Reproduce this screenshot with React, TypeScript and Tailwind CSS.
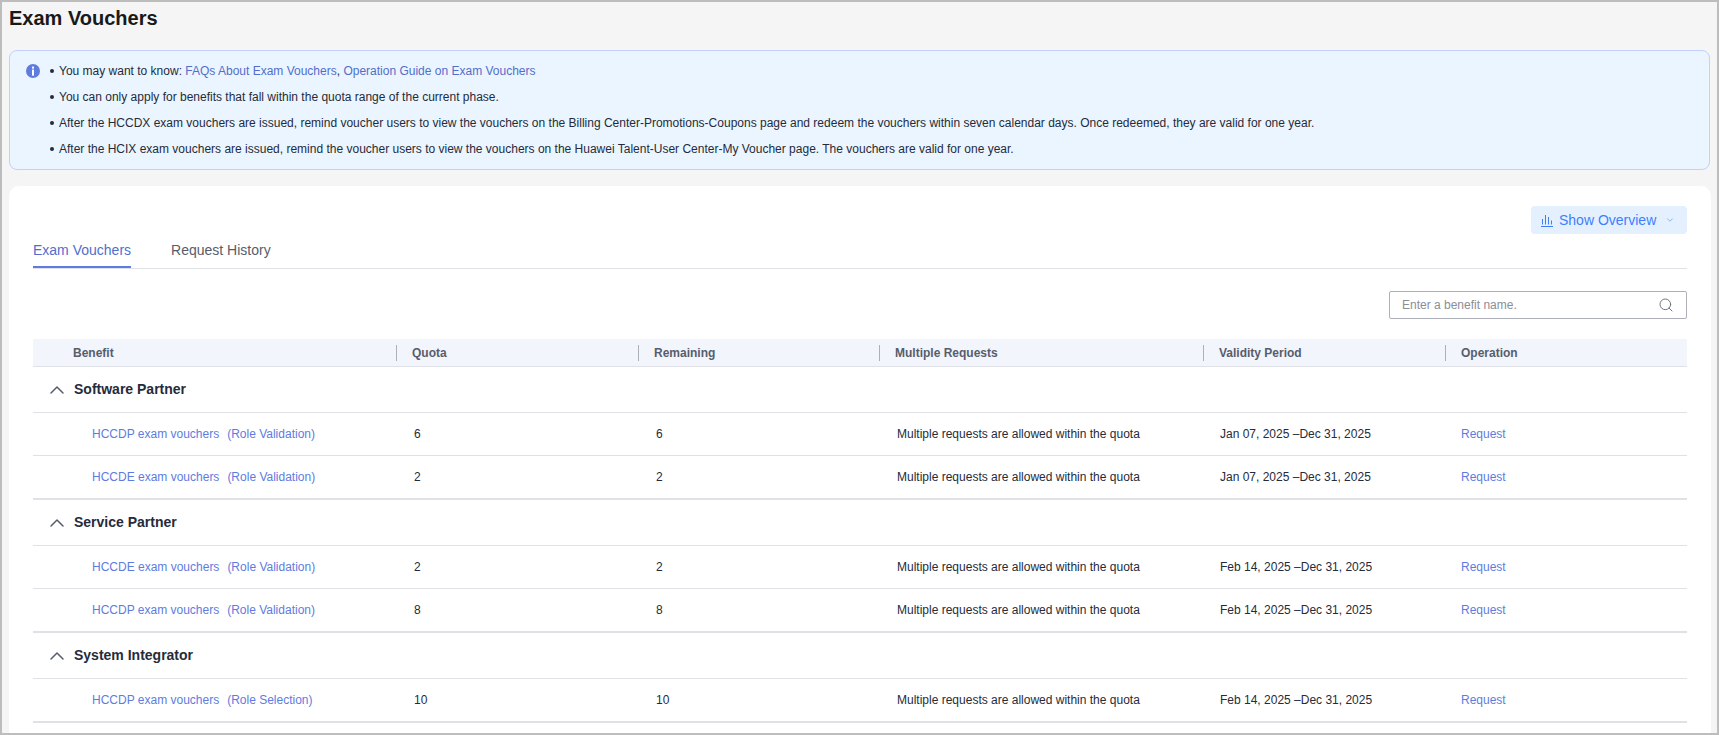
import { ChevronDown, ChevronUp, Search } from "lucide-react";

const font = { fontFamily: '"Liberation Sans", Arial, sans-serif' };

const groups = [
  {
    name: "Software Partner",
    rows: [
      { benefit: "HCCDP exam vouchers", role: "(Role Validation)", quota: "6", start: "Jan 07, 2025" },
      { benefit: "HCCDE exam vouchers", role: "(Role Validation)", quota: "2", start: "Jan 07, 2025" },
    ],
  },
  {
    name: "Service Partner",
    rows: [
      { benefit: "HCCDE exam vouchers", role: "(Role Validation)", quota: "2", start: "Feb 14, 2025" },
      { benefit: "HCCDP exam vouchers", role: "(Role Validation)", quota: "8", start: "Feb 14, 2025" },
    ],
  },
  {
    name: "System Integrator",
    rows: [{ benefit: "HCCDP exam vouchers", role: "(Role Selection)", quota: "10", start: "Feb 14, 2025" }],
  },
];

const notes = [
  "You can only apply for benefits that fall within the quota range of the current phase.",
  "After the HCCDX exam vouchers are issued, remind voucher users to view the vouchers on the Billing Center-Promotions-Coupons page and redeem the vouchers within seven calendar days. Once redeemed, they are valid for one year.",
  "After the HCIX exam vouchers are issued, remind the voucher users to view the vouchers on the Huawei Talent-User Center-My Voucher page. The vouchers are valid for one year.",
];

const columns = "grid grid-cols-[363px_242px_241px_324px_242px_1fr]";

function Bullet() {
  return <span className="mr-[5px] h-[4px] w-[4px] shrink-0 rounded-full bg-[#252b3a]" />;
}

function HeaderCell({ label, first }: { label: string; first?: boolean }) {
  return (
    <div className={first ? "flex h-full items-center pl-[40px]" : "flex h-full items-center"}>
      {!first && <span className="mr-[15px] h-[16px] w-px bg-[#adb0b8]" />}
      <span>{label}</span>
    </div>
  );
}

export default function App() {
  return (
    <div style={font} className="h-[735px] w-[1719px] overflow-hidden border-2 border-[#bdbdbd] bg-[#f5f5f5] text-[12px] text-[#252b3a]">
      <h1 className="ml-[7px] h-[48px] pt-[2px] text-[20px] font-bold leading-[28px] text-[#191919]">Exam Vouchers</h1>

      {/* notice */}
      <div className="ml-[7px] mr-[7px] flex h-[120px] rounded-[8px] border border-[#c2d0fb] bg-[#ebf5ff] pl-[16px] pt-[7px] leading-[26px]">
        <svg viewBox="0 0 14 14" className="mr-[10px] mt-[6px] h-[14px] w-[14px] shrink-0">
          <circle cx="7" cy="7" r="7" fill="#5e7ce0" />
          <rect x="6" y="2.6" width="2" height="2" fill="#fff" />
          <rect x="6" y="5.6" width="2" height="6" fill="#fff" />
        </svg>
        <div>
          <div className="flex items-center">
            <Bullet />
            <span>
              You may want to know: <a className="text-[#526ecc]">FAQs About Exam Vouchers</a>, <a className="text-[#526ecc]">Operation Guide on Exam Vouchers</a>
            </span>
          </div>
          {notes.map((n) => (
            <div key={n} className="flex items-center">
              <Bullet />
              <span>{n}</span>
            </div>
          ))}
        </div>
      </div>

      {/* card */}
      <div className="ml-[7px] mr-[6px] mt-[16px] h-[600px] rounded-t-[10px] bg-white pl-[24px] pr-[24px] pt-[20px]">
        <div className="flex justify-end">
          <button className="flex h-[28px] w-[156px] items-center rounded-[4px] bg-[#e5f0ff] pl-[10px] text-[14px] text-[#3d7eff]">
            <svg viewBox="0 0 12 13" fill="none" stroke="currentColor" className="mr-[6px] h-[13px] w-[12px]">
              <path d="M1.5 5V10.5M4.5 1V10.5M7.5 3V10.5M10.5 6.5V10.5M0 12.5H12" />
            </svg>
            Show Overview
            <ChevronDown className="ml-[9px] h-[10px] w-[10px] text-[#7ba5ff]" strokeWidth={2} />
          </button>
        </div>

        <div className="flex h-[35px] items-start gap-[40px] border-b border-[#dfe1e6] text-[14px]">
          <div className="h-[34px] border-b-2 border-[#5e7ce0] leading-[32px] text-[#526ecc]">Exam Vouchers</div>
          <div className="leading-[32px] text-[#575d6c]">Request History</div>
        </div>

        <div className="mt-[22px] flex justify-end">
          <div className="flex h-[28px] w-[298px] items-center justify-between rounded-[2px] border border-[#adb0b8] pl-[12px] pr-[12px] text-[#8a8e99]">
            <span>Enter a benefit name.</span>
            <Search className="h-[16px] w-[16px] text-[#71757f]" strokeWidth={1.5} />
          </div>
        </div>

        <div className={`${columns} mt-[20px] h-[28px] border-b border-[#dfe1e6] bg-[#f2f5fc] font-bold text-[#575d6c]`}>
          <HeaderCell label="Benefit" first />
          <HeaderCell label="Quota" />
          <HeaderCell label="Remaining" />
          <HeaderCell label="Multiple Requests" />
          <HeaderCell label="Validity Period" />
          <HeaderCell label="Operation" />
        </div>

        {groups.map((g) => (
          <div key={g.name} className="border-b-2 border-[#dfe1e6]">
            <div className="flex h-[46px] items-center border-b border-[#dfe1e6] pl-[12px]">
              <ChevronUp className="mr-[5px] h-[24px] w-[24px] text-[#575d6c]" strokeWidth={1.5} />
              <span className="text-[14px] font-bold">{g.name}</span>
            </div>
            {g.rows.map((r, i) => (
              <div key={r.benefit + g.name} className={`${columns} items-center ${i < g.rows.length - 1 ? "h-[43px] border-b border-[#dfe1e6]" : "h-[42px]"}`}>
                <div className="pl-[59px] text-[#5e7ce0]">
                  {r.benefit}
                  <span className="ml-[8px]">{r.role}</span>
                </div>
                <div className="pl-[18px]">{r.quota}</div>
                <div className="pl-[18px]">{r.quota}</div>
                <div className="pl-[18px]">Multiple requests are allowed within the quota</div>
                <div className="pl-[17px]">{r.start} –Dec 31, 2025</div>
                <div className="pl-[16px] text-[#5e7ce0]">Request</div>
              </div>
            ))}
          </div>
        ))}
      </div>
    </div>
  );
}
